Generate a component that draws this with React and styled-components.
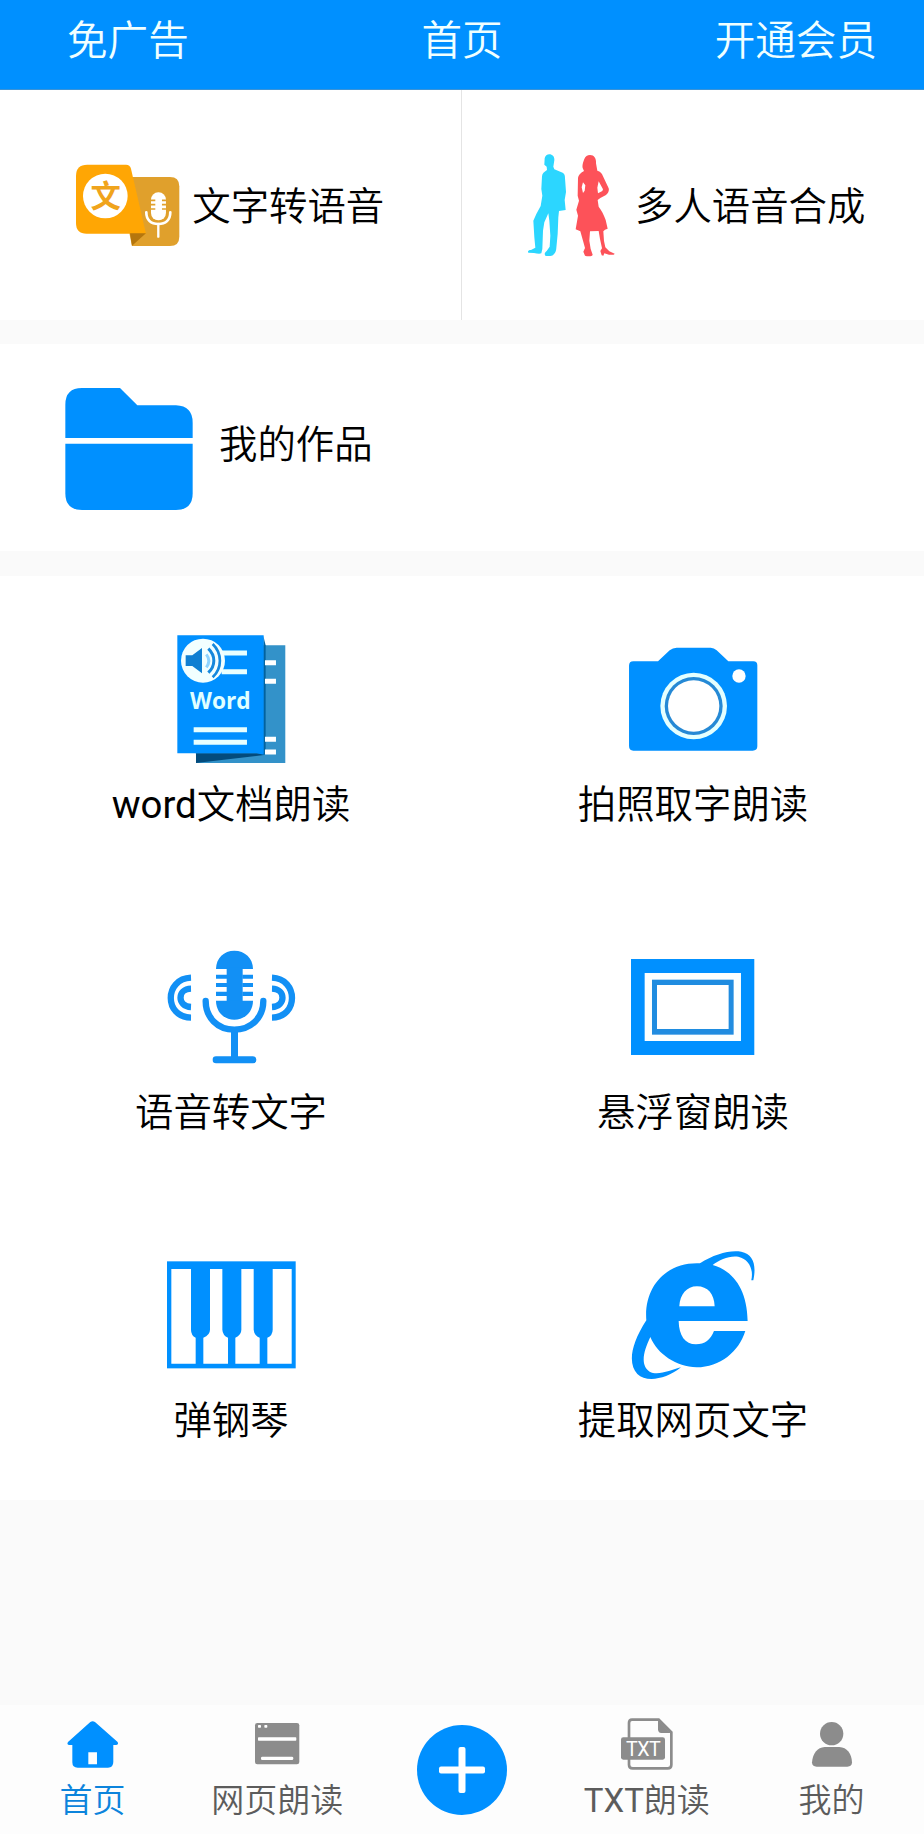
import React from "react";
import styled, { createGlobalStyle, css } from "styled-components";

const BLUE = "#0090ff";

function App() {
  return (
    <>
      <GlobalStyle />
      <Page>
        <Header>
          <HeaderLink>免广告</HeaderLink>
          <HeaderTitle>首页</HeaderTitle>
          <HeaderLink $end>开通会员</HeaderLink>
        </Header>

        <TopRow>
          <TopCell $left={76} $gap={13}>
            <TranslateIcon />
            <Label>文字转语音</Label>
          </TopCell>
          <TopCell $left={65} $gap={20} $divider>
            <PeopleIcon />
            <Label>多人语音合成</Label>
          </TopCell>
        </TopRow>

        <Works>
          <FolderIcon />
          <Label>我的作品</Label>
        </Works>

        <Grid>
          {tools.map(({ latin, name, Icon }) => (
            <Tool key={name}>
              <ToolIcon>
                <Icon />
              </ToolIcon>
              <Label>
                {latin && <Latin>{latin}</Latin>}
                {name}
              </Label>
            </Tool>
          ))}
        </Grid>

        <TabBar>
          <Tab $active>
            <TabIcon>
              <HomeIcon />
            </TabIcon>
            <TabLabel>首页</TabLabel>
          </Tab>
          <Tab>
            <TabIcon>
              <BrowserIcon />
            </TabIcon>
            <TabLabel>网页朗读</TabLabel>
          </Tab>
          <Tab>
            <AddButton aria-label="add">
              <svg width="46" height="46" viewBox="0 0 46 46">
                <rect x="0" y="19.5" width="46" height="7" rx="2" fill="#fff" />
                <rect x="19.5" y="0" width="7" height="46" rx="2" fill="#fff" />
              </svg>
            </AddButton>
          </Tab>
          <Tab>
            <TabIcon>
              <TxtIcon />
            </TabIcon>
            <TabLabel>
              <Latin>TXT</Latin>朗读
            </TabLabel>
          </Tab>
          <Tab>
            <TabIcon>
              <UserIcon />
            </TabIcon>
            <TabLabel>我的</TabLabel>
          </Tab>
        </TabBar>
      </Page>
    </>
  );
}

export default App;

// ============================== ICONS ==============================

function TranslateIcon() {
  return (
    <svg width="103.3" height="82" viewBox="48 56 310 246">
      <path d="M210 95H330Q358 95 358 123V274Q358 302 330 302H216L208 262Z" fill="#e0a02c" />
      <path d="M82 58H198Q210 58 213 70L258 265H80Q48 265 48 233V92Q48 58 82 58Z" fill="#ffa604" />
      <path d="M210 264H258L216 301Z" fill="#b5760d" />
      <circle cx="136" cy="152" r="67" fill="#fff" />
      <text
        x="137"
        y="186"
        textAnchor="middle"
        fontSize="91"
        fontWeight="700"
        fill="#f0a41c"
        fontFamily="'Noto Sans CJK SC', sans-serif"
      >
        文
      </text>
      <rect x="273" y="141" width="45" height="84" rx="22" fill="#fff" />
      <path d="M273 165H286M273 178H286M273 191H286M306 165H318M306 178H318M306 191H318" stroke="#e0a02c" strokeWidth="5" />
      <path d="M259 201C259 224 273 236 295 236C317 236 331 224 331 201" fill="none" stroke="#fff" strokeWidth="8" strokeLinecap="round" />
      <path d="M295 236V274" stroke="#fff" strokeWidth="7" strokeLinecap="round" />
    </svg>
  );
}

function PeopleIcon() {
  return (
    <svg width="88" height="102.7" viewBox="51 40 264 308">
      <path
        d="M118 41C128 41 134 49 133 59C132 66 131 72 130 78L133 86L158 96C164 99 165 105 165 113L168 154L164 178L167 208L147 211L145 230L143 280L139 322C138 336 131 345 121 346H107C102 342 104 335 110 331L119 318L121 285L118 240L115 218L103 245L99 270L97 325L94 338C87 340 80 338 72 337L55 336C52 331 56 328 63 328L76 321L73 290L70 240L79 220L92 196L97 165L94 145L96 107C97 98 102 94 111 88L110 78L103 72L104 53C106 45 111 41 118 41Z"
        fill="#2cd6ff"
      />
      <path
        fillRule="evenodd"
        d="M240 43C254 43 259 55 258 68L262 90C271 92 276 98 279 107L296 143C298 150 295 157 288 163L271 172L263 178L266 198C275 209 281 222 287 238L293 264L285 267L280 272L282 301L286 320L298 332L314 339C313 343 304 343 297 342L283 338L280 345L275 344L271 331L276 323L270 295L266 271L240 272L238 300L242 325L248 342C247 348 233 348 225 345L220 333L225 322L219 300L211 272L197 266L204 225L199 207L207 180L203 165L204 112C205 103 211 97 222 91L218 82C216 75 219 65 223 55C226 47 232 43 240 43ZM219 125L215 140L219 157L224 150L226 134ZM266 122L262 141L264 158L277 151L279 146Z"
        fill="#fd5259"
      />
    </svg>
  );
}

function FolderIcon() {
  return (
    <svg width="128" height="122" viewBox="46 54 382 366">
      <path d="M46 204V104Q46 54 96 54H210L262 106H378Q428 108 428 158V204Z" fill={BLUE} />
      <path d="M46 221H428V370Q428 420 378 420H96Q46 420 46 370Z" fill={BLUE} />
    </svg>
  );
}

function WordIcon() {
  return (
    <svg width="109.3" height="128.3" viewBox="228 42 328 385">
      <path d="M440 76H556V429H288V400Z" fill="#3392c9" />
      <path d="M288 400H492V405L288 429Z" fill="#034b7c" />
      <path d="M490 47L497 76V403L490 405Z" fill="#02629f" />
      <path d="M232 46H491V404L470 400H232Z" fill={BLUE} />
      <path d="M495 128H528M495 184H528M495 358H528M495 396H528" stroke="#fff" strokeWidth="15" />
      <path d="M365 99H441M365 155H441M281 329H441M281 367H441" stroke="#e8ffff" strokeWidth="15" />
      <circle cx="309" cy="122" r="66" fill="#f2ffff" />
      <path d="M257 106H277L306 84V160L277 138H257Z" fill="#0f7fd2" />
      <path d="M319 103Q334 122 319 142" fill="none" stroke="#8fd4ff" strokeWidth="9" />
      <path d="M325 86C347 107 347 137 325 158" fill="none" stroke="#1588dc" strokeWidth="9" />
      <path d="M338 72C367 100 367 144 338 172" fill="none" stroke="#1588dc" strokeWidth="8" />
      <text
        x="361"
        y="267"
        textAnchor="middle"
        textLength="182"
        lengthAdjust="spacingAndGlyphs"
        fontSize="67"
        fontWeight="700"
        fill="#e0ffff"
        fontFamily="'Open Sans', 'Noto Sans', sans-serif"
      >
        Word
      </text>
    </svg>
  );
}

function CameraIcon() {
  return (
    <svg width="128.7" height="103.3" viewBox="207 50 386 310">
      <path d="M220 93H294L329 60Q338 52 350 52H452Q462 52 470 60L505 93H580Q592 93 592 105V348Q592 361 578 361H220Q207 361 207 347V106Q207 93 220 93Z" fill={BLUE} />
      <circle cx="401" cy="227" r="100" fill="#e4ffff" />
      <circle cx="401" cy="227" r="87" fill="#2589d5" />
      <circle cx="401" cy="227" r="77" fill="#fff" />
      <circle cx="537" cy="137" r="20" fill="#fff" />
    </svg>
  );
}

function MicIcon() {
  return (
    <svg width="129" height="113.3" viewBox="141 60 387 340">
      <g fill="#1290f5">
        <path d="M288 117C288 84 312 62 343 62C374 62 399 84 399 117Z" />
        <rect x="320" y="112" width="48" height="104" />
        <path d="M288 212H399C399 246 374 269 343 269C312 269 288 246 288 212Z" />
        <path d="M288 134H321V146H288ZM288 159H321V171H288ZM288 185H321V198H288ZM367 134H399V146H367ZM367 159H399V171H367ZM367 185H399V198H367Z" />
        <rect x="278" y="379" width="131" height="21" rx="10" />
        <rect x="333" y="298" width="21" height="90" />
      </g>
      <g fill="none" stroke="#1290f5" strokeWidth="19">
        <path d="M257 213C257 262 292 299 343 299C394 299 430 262 430 213" strokeLinecap="round" />
        <path d="M213 143C132 146 132 262 213 263" />
        <path d="M213 176C171 177 171 229 213 231" />
        <path d="M456 143C536 146 536 262 456 263" />
        <path d="M456 176C498 177 498 229 456 231" />
      </g>
    </svg>
  );
}

function WindowIcon() {
  return (
    <svg width="123.3" height="96" viewBox="155 57 370 288">
      <rect x="155" y="57" width="370" height="288" fill={BLUE} />
      <rect x="196" y="99" width="289" height="204" fill="#fbffff" />
      <rect x="218" y="119" width="245" height="165" fill="#1f8ce0" />
      <rect x="233" y="135" width="215" height="132" fill="#fff" />
    </svg>
  );
}

function PianoIcon() {
  return (
    <svg width="128.7" height="107.7" viewBox="50 62 386 323">
      <rect x="50" y="63" width="386" height="321" fill={BLUE} />
      <g fill="#fff">
        <path d="M63 86H122V268Q122 285 136 292V370H63Z" />
        <path d="M179 86H216V268Q217 285 233 292V370H159V292Q179 284 179 268Z" />
        <path d="M273 86H310V268Q311 285 328 292V370H255V292Q273 284 273 268Z" />
        <path d="M367 86H424V370H351V292Q367 285 367 268Z" />
      </g>
    </svg>
  );
}

function BrowserEIcon() {
  return (
    <svg width="124.3" height="128.7" viewBox="183 59 373 386">
      <path
        fillRule="evenodd"
        d="M390 99C433 71 480 58 514 64C550 71 560 104 550 150H544C551 119 539 87 505 79C478 75 449 88 428 104C487 120 532 175 533 272H326C327 316 345 342 378 342C404 342 422 328 432 302H526C507 364 450 411 380 411C319 408 263 373 241 320C219 367 211 404 239 424C264 437 303 419 333 411C287 448 229 457 202 431C174 401 181 344 229 270C221 172 286 94 390 99ZM328 228H434C433 191 413 168 381 168C350 168 330 192 328 228Z"
        fill={BLUE}
      />
    </svg>
  );
}

function HomeIcon() {
  return (
    <svg width="51.3" height="46.7" viewBox="200 92 154 140">
      <path
        fillRule="evenodd"
        d="M270 95Q277 90 284 95L352 155Q356 163 347 164H339V215Q339 232 323 232H232Q216 232 216 216V164H207Q198 163 203 155ZM264 186V222H290V186Z"
        fill={BLUE}
      />
    </svg>
  );
}

function BrowserIcon() {
  return (
    <svg width="44.3" height="41.3" viewBox="765 100 133 124">
      <rect x="765" y="100" width="133" height="124" rx="7" fill="#8c8c8c" />
      <rect x="774" y="106" width="9" height="8" rx="2" fill="#fff" />
      <rect x="793" y="106" width="9" height="8" rx="2" fill="#fff" />
      <rect x="774" y="143" width="115" height="10" rx="2" fill="#fff" />
      <rect x="783" y="201" width="97" height="10" rx="4" fill="#fff" />
    </svg>
  );
}

function TxtIcon() {
  return (
    <svg width="51.7" height="51.7" viewBox="363 85 155 155">
      <path d="M396 90H476L514 128V225Q514 236 503 236H398Q387 236 387 225V100Q387 90 396 90Z" fill="none" stroke="#8c8c8c" strokeWidth="8" />
      <path d="M474 92L512 130H484Q474 130 474 119Z" fill="#8c8c8c" />
      <rect x="363" y="143" width="132" height="67" rx="7" fill="#8c8c8c" />
      <text
        x="430"
        y="198"
        textAnchor="middle"
        textLength="104"
        fontSize="59"
        fill="#fff"
        fontFamily="Roboto, sans-serif"
      >
        TXT
      </text>
    </svg>
  );
}

function UserIcon() {
  return (
    <svg width="40" height="45" viewBox="935 95 120 135">
      <circle cx="994" cy="130" r="35" fill="#8c8c8c" />
      <path d="M973 170H1017C1040 171 1054 190 1055 216Q1055 229 1041 229H949Q935 229 935 216C937 190 951 171 973 170Z" fill="#8c8c8c" />
    </svg>
  );
}

const tools = [
  { latin: "word", name: "文档朗读", Icon: WordIcon },
  { name: "拍照取字朗读", Icon: CameraIcon },
  { name: "语音转文字", Icon: MicIcon },
  { name: "悬浮窗朗读", Icon: WindowIcon },
  { name: "弹钢琴", Icon: PianoIcon },
  { name: "提取网页文字", Icon: BrowserEIcon },
];

// ============================== STYLES ==============================

const GlobalStyle = createGlobalStyle`
  * {
    box-sizing: border-box;
  }

  body {
    margin: 0;
    background: #fafafa;
    font-family: Roboto, "Noto Sans CJK SC", sans-serif;
  }

  svg {
    display: block;
    flex-shrink: 0;
    overflow: visible;
  }
`;

const Page = styled.div`
  width: 924px;
  height: 1834px;
  display: flex;
  flex-direction: column;
  overflow: hidden;
`;

const Header = styled.header`
  height: 90px;
  flex-shrink: 0;
  padding: 0 47px 8px 67px;
  display: grid;
  grid-template-columns: 1fr auto 1fr;
  align-items: center;
  background: ${BLUE};
  border-bottom: 1px solid #3c93d6;
  color: #f0ffff;
  font-size: 40.6px;
  line-height: 60px;
  font-weight: 350;
`;

const HeaderLink = styled.span`
  justify-self: ${({ $end }) => ($end ? "end" : "start")};
`;

const HeaderTitle = styled.h1`
  margin: 0;
  padding-right: 20px;
  font: inherit;
`;

const TopRow = styled.section`
  height: 230px;
  flex-shrink: 0;
  display: grid;
  grid-template-columns: 461px 463px;
  background: #fff;
`;

const Label = styled.span`
  font-size: 38.4px;
  line-height: 56px;
  font-weight: 350;
  color: #000;
  white-space: nowrap;
`;

const Latin = styled.span`
  font-weight: 400;
`;

const TopCell = styled.div`
  display: flex;
  align-items: center;
  gap: ${({ $gap }) => $gap}px;
  padding-left: ${({ $left }) => $left}px;

  ${({ $divider }) =>
    $divider &&
    css`
      border-left: 1px solid #e4e4e4;
    `}

  ${Label} {
    margin-top: 4px;
  }
`;

const Works = styled.section`
  height: 207px;
  margin: 24px 0 25px;
  flex-shrink: 0;
  display: flex;
  align-items: center;
  gap: 26px;
  padding: 2px 0 0 65px;
  background: #fff;

  ${Label} {
    margin-bottom: 7px;
  }
`;

const Grid = styled.section`
  display: grid;
  grid-template-columns: 1fr 1fr;
  grid-auto-rows: 308px;
  background: #fff;
`;

const Tool = styled.div`
  display: flex;
  flex-direction: column;
  align-items: center;
  padding-top: 58px;
`;

const ToolIcon = styled.div`
  height: 129px;
  margin-bottom: 14px;
  display: flex;
  align-items: center;
`;

const TabBar = styled.nav`
  height: 129px;
  margin-top: auto;
  flex-shrink: 0;
  display: grid;
  grid-template-columns: repeat(5, 1fr);
  background: #fdfdfd;
`;

const Tab = styled.div`
  display: flex;
  flex-direction: column;
  align-items: center;
  padding-top: 13px;
  color: ${({ $active }) => ($active ? "#0c84dc" : "#5c5c5c")};
`;

const TabIcon = styled.div`
  height: 52px;
  margin-bottom: 7px;
  display: flex;
  align-items: center;
`;

const TabLabel = styled.span`
  font-size: 33px;
  line-height: 48px;
  font-weight: 350;
  white-space: nowrap;
`;

const AddButton = styled.button`
  width: 90px;
  height: 90px;
  margin-top: 7px;
  padding: 0;
  display: flex;
  align-items: center;
  justify-content: center;
  border: none;
  border-radius: 50%;
  background: ${BLUE};
`;
